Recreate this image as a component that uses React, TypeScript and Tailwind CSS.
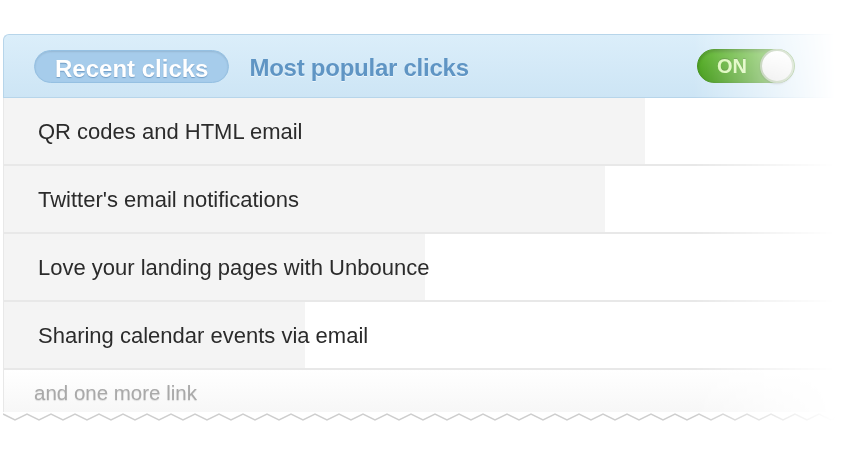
import React, { useState } from 'react';

const links = [
  { title: 'QR codes and HTML email', width: 641 },
  { title: "Twitter's email notifications", width: 601 },
  { title: 'Love your landing pages with Unbounce', width: 421 },
  { title: 'Sharing calendar events via email', width: 301 },
];

function Toggle({ on, onChange }: { on: boolean; onChange: () => void }) {
  return (
    <button
      onClick={onChange}
      className="relative flex h-[34px] w-[98px] items-center rounded-full border border-[#3f8f17] bg-gradient-to-b from-[#58b327] to-[#419816] shadow-[inset_0_2px_3px_rgba(0,0,0,0.2)]"
    >
      <span className="pl-[19px] text-[20px] font-bold text-[#d9f7b4] [text-shadow:0_-1px_0_rgba(0,0,0,0.2)]">
        {on ? 'ON' : 'OFF'}
      </span>
      <span className="absolute right-[0px] top-[-1px] h-[34px] w-[34px] rounded-full border-2 border-[#9bb58c] bg-gradient-to-b from-[#ffffff] to-[#e2e2e2] shadow-[0_1px_2px_rgba(0,0,0,0.3)]" />
    </button>
  );
}

export default function App() {
  const [tab, setTab] = useState<'recent' | 'popular'>('recent');
  const [on, setOn] = useState(true);

  const active =
    'h-[33px] rounded-full border border-[#95c0e2] bg-[#a6cceb] px-[20px] text-[24px] font-bold text-white shadow-[inset_0_1px_2px_rgba(0,0,0,0.1)] [text-shadow:0_1px_1px_rgba(60,110,160,0.5)]';
  const idle =
    'h-[33px] px-[20px] text-[24px] font-bold tracking-[-0.25px] text-[#5f95c4] [text-shadow:0_1px_0_rgba(255,255,255,0.6)]';

  return (
    <div className="h-[456px] w-[853px] bg-white pt-[34px] pl-[3px] font-['Liberation_Sans',Arial,sans-serif]">
      <div className="w-[832px] [mask-image:linear-gradient(to_right,black_83%,transparent_100%)]">
        {/* Header */}
        <div className="flex h-[64px] items-center rounded-tl-[6px] border-t border-l border-b border-[#b7d5ea] bg-gradient-to-b from-[#dbeefa] to-[#cde5f5] pl-[30px] pr-[40px]">
          <button onClick={() => setTab('recent')} className={tab === 'recent' ? active : idle}>
            Recent clicks
          </button>
          <button onClick={() => setTab('popular')} className={tab === 'popular' ? active : idle}>
            Most popular clicks
          </button>
          <div className="ml-auto">
            <Toggle on={on} onChange={() => setOn(!on)} />
          </div>
        </div>

        {/* Link rows */}
        {links.map((link) => (
          <div key={link.title} className="h-[68px] border-b-2 border-l border-[#e8e8e8] bg-white">
            <div
              className="flex h-full items-center bg-[#f4f4f4] pl-[34px] text-[22px] text-[#2b2b2b] whitespace-nowrap"
              style={{ width: link.width }}
            >
              {link.title}
            </div>
          </div>
        ))}

        {/* Footer */}
        <div className="h-[42px] border-l border-[#e8e8e8] bg-gradient-to-b from-white to-[#f7f7f7] pl-[30px] pt-[11px] text-[20.5px] leading-[24px] text-[#a9a9a9] [text-shadow:0_1px_1px_rgba(0,0,0,0.12)]">
          and one more link
        </div>
        <svg width="832" height="12" className="block">
          <defs>
            <filter id="soft" x="-5%" y="-50%" width="110%" height="200%">
              <feGaussianBlur stdDeviation="0.7" />
            </filter>
          </defs>
          <polyline
            points={Array.from({ length: 72 }, (_, i) => `${i * 12},${i % 2 === 0 ? 2 : 8}`).join(' ')}
            fill="none"
            stroke="#cfcfcf"
            strokeWidth="1.5"
            filter="url(#soft)"
          />
        </svg>
      </div>
    </div>
  );
}
